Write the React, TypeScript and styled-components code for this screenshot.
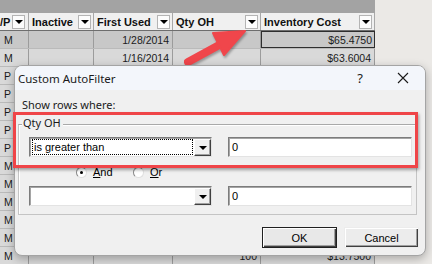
import React from "react";
import styled, { createGlobalStyle } from "styled-components";

const GlobalStyle = createGlobalStyle`
  html, body {
    margin: 0;
    padding: 0;
  }
  body {
    font-family: "Liberation Sans", Arial, sans-serif;
  }
`;

const COLUMNS = "29px 65px 79px 88px 114px";

const Screen = styled.div`
  position: relative;
  width: 432px;
  height: 264px;
  overflow: hidden;
  display: flex;
  background: #ebe9e6;
`;

const Sheet = styled.div`
  width: 375px;
  flex: none;
  display: flex;
  flex-direction: column;
  background: #d9d9d9;
`;

const TopBand = styled.div`
  height: 13px;
  flex: none;
  background: #a3a3a3;
`;

const HeaderRow = styled.div`
  display: grid;
  grid-template-columns: ${COLUMNS};
  height: 18px;
  flex: none;
  box-sizing: border-box;
  background: #f0f0f0;
  border-bottom: 1px solid #6e6e6e;
`;

const HeaderCell = styled.div<{ $flush?: boolean }>`
  display: flex;
  align-items: center;
  justify-content: space-between;
  padding: 0 ${({ $flush }) => ($flush ? "3px 0 0" : "2px 0 3px")};
  border-right: 1px solid #a8a8a8;
  overflow: hidden;
  white-space: nowrap;
  font-size: 11px;
  font-weight: bold;
  color: #111;
`;

const FilterButton = styled.span`
  flex: none;
  width: 13px;
  height: 14px;
  box-sizing: border-box;
  border: 1px solid #b4b4b4;
  background: #fcfcfc;
  display: flex;
  align-items: center;
  justify-content: center;

  &::after {
    content: "";
    border-left: 4px solid transparent;
    border-right: 4px solid transparent;
    border-top: 4px solid #000;
  }
`;

const DataRow = styled.div<{ $selected?: boolean }>`
  display: grid;
  grid-template-columns: ${COLUMNS};
  height: 18px;
  flex: none;
  box-sizing: border-box;
  border-bottom: 1px solid #bababa;
  background: ${({ $selected }) => ($selected ? "#c8c8c8" : "#d9d9d9")};
`;

const DataCell = styled.div<{ $right?: boolean; $active?: boolean }>`
  display: flex;
  align-items: center;
  justify-content: ${({ $right }) => ($right ? "flex-end" : "flex-start")};
  padding: 0 3px 0 4px;
  border-right: 1px solid #9c9c9c;
  overflow: hidden;
  white-space: nowrap;
  font-size: 10.5px;
  color: #1b1b1b;
  ${({ $active }) =>
    $active && "outline: 1px solid #2e2e2e; outline-offset: -1px; padding-right: 2px;"}
`;

const RightPane = styled.div`
  flex: 1;
  background: #ebe9e6;
`;

const ArrowMark = styled.svg`
  position: absolute;
  left: 175px;
  top: 22px;
  filter: drop-shadow(1px 2px 1px rgba(0, 0, 0, 0.3));
`;

const Dialog = styled.div`
  position: absolute;
  left: 14px;
  top: 65px;
  width: 412px;
  height: 191px;
  box-sizing: border-box;
  border: 1px solid #a4a4a4;
  border-radius: 8px;
  background: #f0f0f0;
  box-shadow: 0 3px 10px rgba(0, 0, 0, 0.28);
  display: flex;
  flex-direction: column;
  font-size: 11px;
  color: #000;
`;

const TitleBar = styled.div`
  height: 24px;
  flex: none;
  display: flex;
  align-items: center;
  padding-left: 3px;
  background: #f3f6fb;
  border-radius: 7px 7px 0 0;
`;

const Title = styled.span`
  flex: 1;
  font-family: "Noto Sans", sans-serif;
  font-size: 11.5px;
  color: #1a1a1a;
`;

const HelpMark = styled.span`
  width: 30px;
  margin-right: 6px;
  text-align: center;
  font-family: "Noto Sans", sans-serif;
  font-size: 13px;
  color: #1a1a1a;
`;

const CloseButton = styled.span`
  width: 44px;
  height: 24px;
  display: flex;
  align-items: center;
  justify-content: center;
`;

const Body = styled.div`
  flex: 1;
  display: flex;
  flex-direction: column;
  padding: 0 8px 0 3px;
`;

const Caption = styled.div`
  margin: 8px 0 0 4px;
  height: 14px;
  line-height: 14px;
  font-family: "Noto Sans", sans-serif;
  font-size: 11px;
  color: #1a1a1a;
`;

const GroupFrame = styled.div`
  margin-top: 12px;
  display: flex;
  flex-direction: column;
  padding: 0 4px 8px 10px;
  border: 1px solid #c4c4c4;
  border-top-color: #a9a9a9;
  box-shadow: inset 1px 1px 0 #fff;
`;

const GroupLabel = styled.span`
  align-self: flex-start;
  margin: -9px 0 0 -7px;
  padding: 0 2px 0 1px;
  height: 14px;
  line-height: 14px;
  background: #f0f0f0;
  font-family: "Noto Sans", sans-serif;
  font-size: 11px;
  color: #1a1a1a;
`;

const FilterRow = styled.div`
  display: flex;
  gap: 16px;
  margin-top: 7px;
`;

const sunken = `
  box-sizing: border-box;
  height: 20px;
  background: #fff;
  border: 1px solid;
  border-color: #7c7c7c #e3e3e3 #e3e3e3 #7c7c7c;
  box-shadow: inset 1px 1px 0 #a5a5a5;
`;

const Combo = styled.div`
  ${sunken}
  flex: none;
  width: 183px;
  display: flex;
`;

const ComboText = styled.div<{ $focused?: boolean }>`
  flex: 1;
  margin: 1px 1px 1px 2px;
  padding-left: 1px;
  display: flex;
  align-items: center;
  border: 1px dotted ${({ $focused }) => ($focused ? "#000" : "transparent")};
  font-size: 11px;
`;

const ComboArrow = styled.div`
  flex: none;
  width: 17px;
  margin: 1px 0 0 0;
  box-sizing: border-box;
  background: #f0f0f0;
  border: 1px solid;
  border-color: #fff #404040 #404040 #fff;
  box-shadow: inset -1px -1px 0 #a0a0a0;
  display: flex;
  align-items: center;
  justify-content: center;

  &::after {
    content: "";
    border-left: 4px solid transparent;
    border-right: 4px solid transparent;
    border-top: 4px solid #000;
  }
`;

const Edit = styled.div`
  ${sunken}
  flex: 1;
  display: flex;
  align-items: center;
  padding-left: 3px;
  font-size: 11px;
`;

const RadioRow = styled.div`
  display: flex;
  align-items: center;
  height: 14px;
  margin-top: 8px;
  padding-left: 47px;
`;

const RadioOption = styled.label<{ $width?: number }>`
  display: flex;
  align-items: center;
  gap: 6px;
  width: ${({ $width }) => ($width ? `${$width}px` : "auto")};
  font-size: 11px;

  u {
    text-decoration: underline;
  }
`;

const RadioCircle = styled.span<{ $checked?: boolean }>`
  width: 11px;
  height: 11px;
  box-sizing: border-box;
  border-radius: 50%;
  border: 1px solid;
  border-color: #8a8a8a #e0e0e0 #e0e0e0 #8a8a8a;
  background: #fff;
  display: flex;
  align-items: center;
  justify-content: center;

  &::after {
    content: "";
    width: 3px;
    height: 3px;
    border-radius: 50%;
    background: ${({ $checked }) => ($checked ? "#000" : "transparent")};
  }
`;

const ButtonRow = styled.div`
  display: flex;
  justify-content: flex-end;
  gap: 7px;
  margin: 12px -2px 0 0;
`;

const DialogButton = styled.button<{ $default?: boolean }>`
  width: 75px;
  height: 21px;
  box-sizing: border-box;
  padding: 0;
  font-family: "Liberation Sans", Arial, sans-serif;
  font-size: 11px;
  color: #000;
  background: ${({ $default }) => ($default ? "#e8e8e8" : "#ececec")};
  border: 1px solid ${({ $default }) => ($default ? "#202020" : "transparent")};
  box-shadow: inset 1px 1px 0 #fff, inset -1px -1px 0 #404040,
    inset -2px -2px 0 #a0a0a0;
`;

const Highlight = styled.div`
  position: absolute;
  left: -2px;
  top: 46px;
  width: 405px;
  height: 56px;
  box-sizing: border-box;
  border: 3px solid #ef4548;
  box-shadow: 1px 2px 3px rgba(0, 0, 0, 0.35);
`;

const rows = [
  { vp: "M", used: "1/28/2014", qty: "", cost: "$65.4750" },
  { vp: "M", used: "1/16/2014", qty: "", cost: "$63.6004" },
  { vp: "P", used: "", qty: "", cost: "" },
  { vp: "P", used: "", qty: "", cost: "" },
  { vp: "P", used: "", qty: "", cost: "" },
  { vp: "P", used: "", qty: "", cost: "" },
  { vp: "P", used: "", qty: "", cost: "" },
  { vp: "M", used: "", qty: "", cost: "" },
  { vp: "M", used: "", qty: "", cost: "" },
  { vp: "M", used: "", qty: "", cost: "" },
  { vp: "M", used: "", qty: "", cost: "" },
  { vp: "M", used: "", qty: "", cost: "" },
  { vp: "M", used: "", qty: "100", cost: "$13.7500" },
];

const App = () => {
  return (
    <Screen>
      <GlobalStyle />
      <Sheet>
        <TopBand />
        <HeaderRow>
          <HeaderCell $flush>
            /P
            <FilterButton />
          </HeaderCell>
          <HeaderCell>
            Inactive
            <FilterButton />
          </HeaderCell>
          <HeaderCell>
            First Used
            <FilterButton />
          </HeaderCell>
          <HeaderCell>
            Qty OH
            <FilterButton />
          </HeaderCell>
          <HeaderCell>
            Inventory Cost
            <FilterButton />
          </HeaderCell>
        </HeaderRow>
        {rows.map((row, i) => (
          <DataRow key={i} $selected={i === 0}>
            <DataCell>{row.vp}</DataCell>
            <DataCell />
            <DataCell $right>{row.used}</DataCell>
            <DataCell $right>{row.qty}</DataCell>
            <DataCell $right $active={i === 0}>
              {row.cost}
            </DataCell>
          </DataRow>
        ))}
      </Sheet>
      <RightPane />

      <ArrowMark width="80" height="48" viewBox="0 0 80 48">
        <line
          x1="13"
          y1="40"
          x2="46"
          y2="22"
          stroke="#f0464b"
          strokeWidth="8"
          strokeLinecap="round"
        />
        <polygon
          points="70,9 38,11 49,33"
          fill="#f0464b"
          stroke="#f0464b"
          strokeWidth="2"
          strokeLinejoin="round"
        />
      </ArrowMark>

      <Dialog>
        <TitleBar>
          <Title>Custom AutoFilter</Title>
          <HelpMark>?</HelpMark>
          <CloseButton>
            <svg width="12" height="12" viewBox="0 0 12 12">
              <path d="M1 1 L11 11 M11 1 L1 11" stroke="#1a1a1a" strokeWidth="1.1" />
            </svg>
          </CloseButton>
        </TitleBar>
        <Body>
          <Caption>Show rows where:</Caption>
          <GroupFrame>
            <GroupLabel>Qty OH</GroupLabel>
            <FilterRow>
              <Combo>
                <ComboText $focused>is greater than</ComboText>
                <ComboArrow />
              </Combo>
              <Edit>0</Edit>
            </FilterRow>
            <RadioRow>
              <RadioOption $width={57}>
                <RadioCircle $checked />
                <span>
                  <u>A</u>nd
                </span>
              </RadioOption>
              <RadioOption>
                <RadioCircle />
                <span>
                  <u>O</u>r
                </span>
              </RadioOption>
            </RadioRow>
            <FilterRow>
              <Combo>
                <ComboText />
                <ComboArrow />
              </Combo>
              <Edit>0</Edit>
            </FilterRow>
          </GroupFrame>
          <ButtonRow>
            <DialogButton $default>OK</DialogButton>
            <DialogButton>Cancel</DialogButton>
          </ButtonRow>
        </Body>
        <Highlight />
      </Dialog>
    </Screen>
  );
};

export default App;
